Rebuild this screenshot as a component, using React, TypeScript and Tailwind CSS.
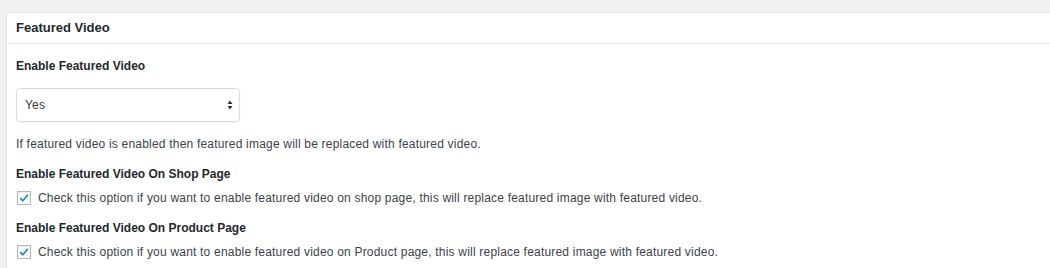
import React from "react";

function Check() {
  return (
    <span className="flex h-[14px] w-[14px] shrink-0 items-center justify-center border border-[#b4b9be] bg-white shadow-[inset_0_1px_2px_rgba(0,0,0,0.1)]">
      <svg width="12" height="12" viewBox="0 0 11 11">
        <path d="M2 5.6 L4.4 8 L9 2.6" fill="none" stroke="#2a8fc0" strokeWidth="1.7" />
      </svg>
    </span>
  );
}

export default function App() {
  const font = { fontFamily: '"Liberation Sans", Arial, sans-serif' };
  return (
    <div className="h-[268px] w-[1050px] overflow-hidden bg-[#f1f1f1] pt-[12px] pl-[6px]" style={font}>
      <div className="h-[300px] border-l border-t border-[#e2e4e7] bg-white">
        <div className="flex h-[31px] items-center border-b border-[#e5e5e5] pl-[9px] text-[13px] font-bold text-[#23282d]">
          Featured Video
        </div>
        <div className="pl-[9px] text-[#32373c]">
          <div className="mt-[15px] text-[12px] font-bold leading-[14px] text-[#23282d]">Enable Featured Video</div>
          <div className="mt-[15px] flex h-[34px] w-[224px] items-center justify-between rounded-[4px] border border-[#dcdcdc] pl-[8px] pr-[6px] text-[12px] tracking-[0.2px] text-[#32373c] shadow-[0_1px_2px_rgba(0,0,0,0.06)]">
            <span>Yes</span>
            <svg width="6" height="10" viewBox="0 0 6 10">
              <path d="M3 0.5 L5.5 4 L0.5 4 Z" fill="#333" />
              <path d="M3 9.5 L5.5 6 L0.5 6 Z" fill="#333" />
            </svg>
          </div>
          <div className="mt-[15px] text-[12px] leading-[14px] tracking-[0.2px] text-[#3c434a]">
            If featured video is enabled then featured image will be replaced with featured video.
          </div>
          <div className="mt-[16px] text-[12px] font-bold leading-[14px] text-[#23282d]">Enable Featured Video On Shop Page</div>
          <div className="mt-[10px] flex items-center gap-[7px] pl-[1px] text-[12px] leading-[14px] tracking-[0.2px] text-[#3c434a]">
            <Check />
            <span>Check this option if you want to enable featured video on shop page, this will replace featured image with featured video.</span>
          </div>
          <div className="mt-[16px] text-[12px] font-bold leading-[14px] text-[#23282d]">Enable Featured Video On Product Page</div>
          <div className="mt-[10px] flex items-center gap-[7px] pl-[1px] text-[12px] leading-[14px] tracking-[0.2px] text-[#3c434a]">
            <Check />
            <span>Check this option if you want to enable featured video on Product page, this will replace featured image with featured video.</span>
          </div>
        </div>
      </div>
    </div>
  );
}
